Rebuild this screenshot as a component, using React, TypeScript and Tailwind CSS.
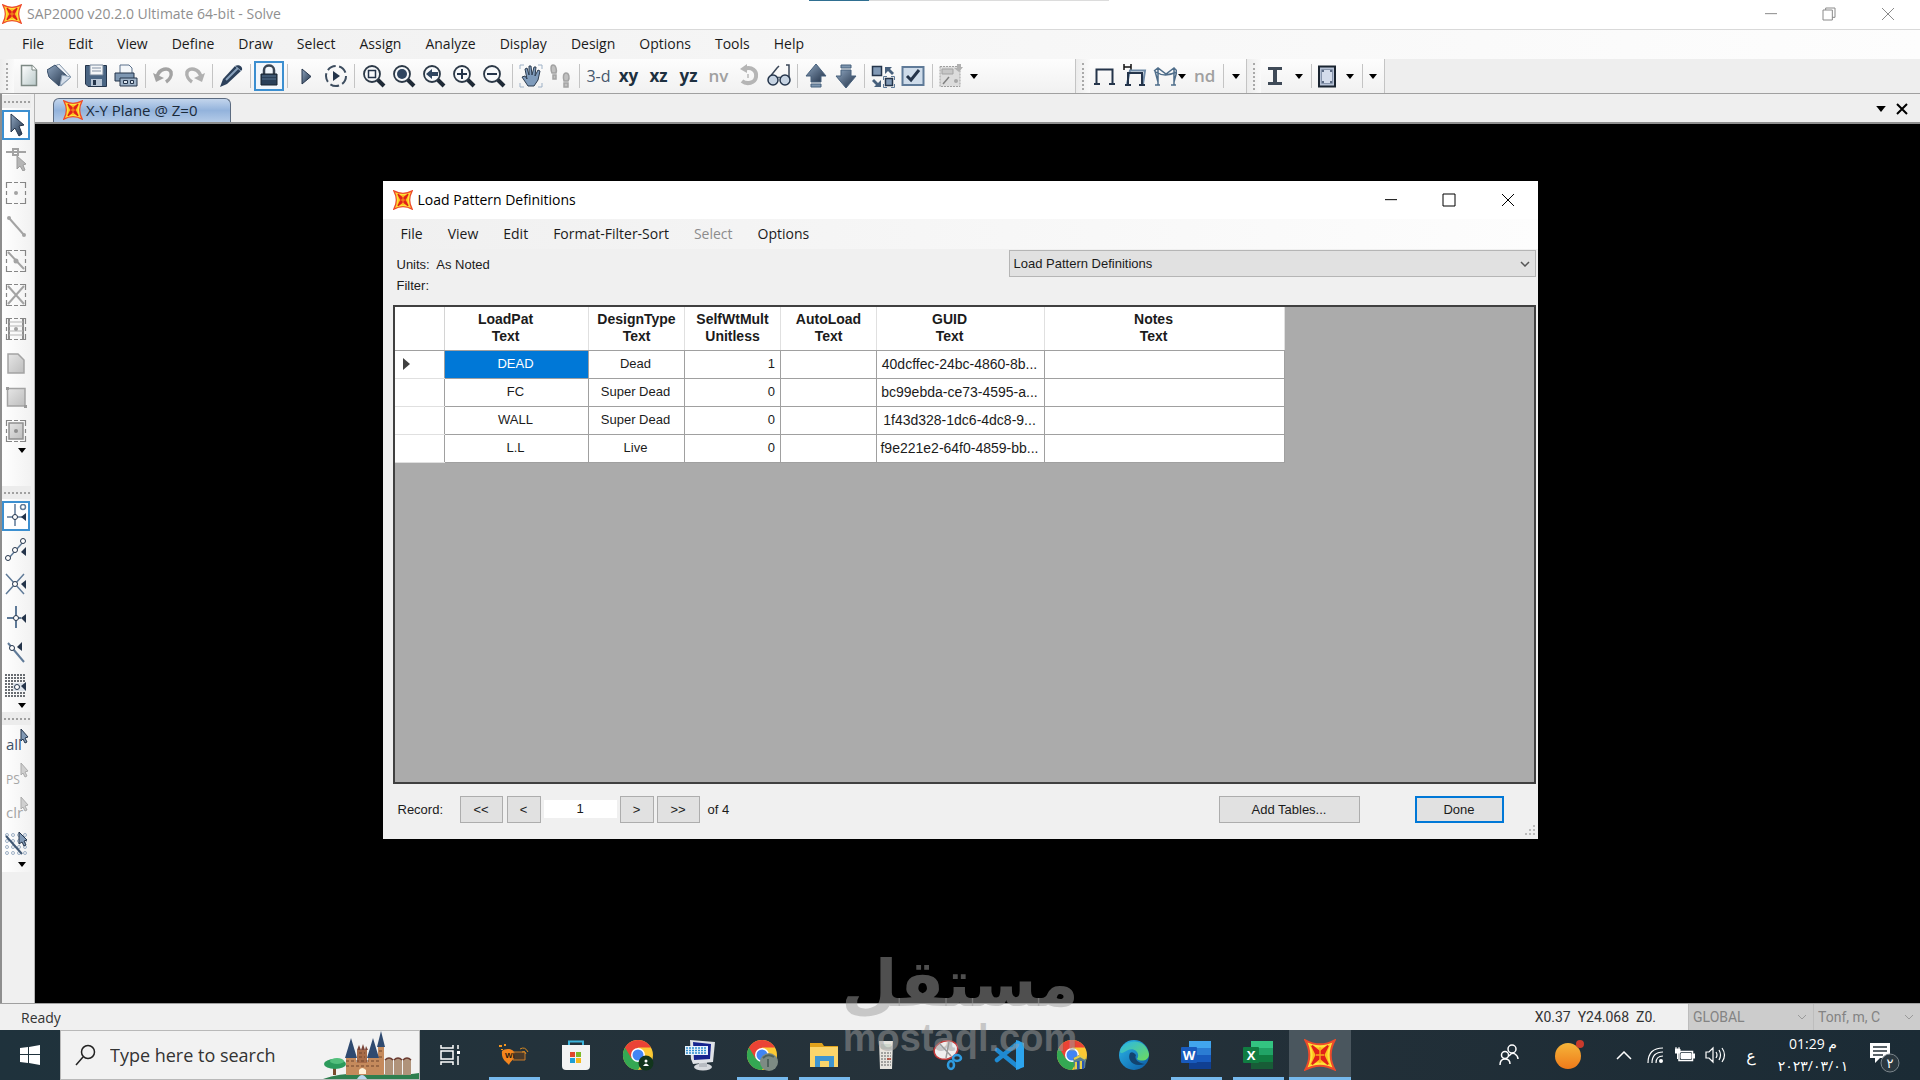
import type { ReactNode } from "react";
import clsx from "clsx";

const NAVY = "#24344a";
const STEEL = "#5f7a98";
const GRAY = "#a3a3a3";

const menuItems = [
  "File", "Edit", "View", "Define", "Draw", "Select", "Assign", "Analyze",
  "Display", "Design", "Options", "Tools", "Help",
];

const dialogMenu = ["File", "View", "Edit", "Format-Filter-Sort", "Select", "Options"];

const columns = [
  { name: "LoadPat", unit: "Text", width: "w-[144px]", shifted: true },
  { name: "DesignType", unit: "Text", width: "w-[96px]", shifted: false },
  { name: "SelfWtMult", unit: "Unitless", width: "w-[96px]", shifted: false },
  { name: "AutoLoad", unit: "Text", width: "w-[96px]", shifted: false },
  { name: "GUID", unit: "Text", width: "w-[168px]", shifted: true },
  { name: "Notes", unit: "Text", width: "w-[240px]", shifted: true },
];

const rows = [
  { pat: "DEAD", type: "Dead", mult: 1, guid: "40dcffec-24bc-4860-8b..." },
  { pat: "FC", type: "Super Dead", mult: 0, guid: "bc99ebda-ce73-4595-a..." },
  { pat: "WALL", type: "Super Dead", mult: 0, guid: "1f43d328-1dc6-4dc8-9..." },
  { pat: "L.L", type: "Live", mult: 0, guid: "f9e221e2-64f0-4859-bb..." },
];

function Icon({ children, size = 24 }: { children: ReactNode; size?: number }) {
  return (
    <svg width={size} height={size} viewBox="0 0 24 24" fill="none" aria-hidden="true" className="shrink-0">
      {children}
    </svg>
  );
}

function SapIcon({ size = 20 }: { size?: number }) {
  return (
    <Icon size={size}>
      <path d="M1 1Q12 7 23 1Q17 12 23 23Q12 17 1 23Q7 12 1 1Z" fill="#ffe23a" stroke="#ee4a2a" strokeWidth="1.500" />
      <path d="M4 4Q12 9 20 4Q15 12 20 20Q12 15 4 20Q9 12 4 4Z" fill="#fdc01c" />
      <path d="M6 5L12 10L18 5L14.500 12L18 19L12 14L6 19L9.500 12Z" fill="#e0201a" stroke="#e0201a" strokeWidth="1.500" />
      <path d="M12 6V18M9 12H15" stroke="#f9a81c" strokeWidth="1" />
    </Icon>
  );
}

/* ---------- toolbar drawings ---------- */

const defs = (
  <svg width="0" height="0" className="absolute" aria-hidden="true">
    <defs>
      <linearGradient id="steel" x1="0" y1="0" x2="1" y2="1">
        <stop offset="0" stopColor="#8fa6c0" />
        <stop offset="1" stopColor="#1f2f45" />
      </linearGradient>
      <linearGradient id="pale" x1="0" y1="0" x2="1" y2="1">
        <stop offset="0" stopColor="#ffffff" />
        <stop offset="1" stopColor="#b9c9c9" />
      </linearGradient>
      <linearGradient id="grayfill" x1="0" y1="0" x2="1" y2="1">
        <stop offset="0" stopColor="#e6e6e6" />
        <stop offset="1" stopColor="#bdbdbd" />
      </linearGradient>
      <linearGradient id="edgeA" x1="0" y1="0" x2="1" y2="1">
        <stop offset="0" stopColor="#2bb7e8" />
        <stop offset="1" stopColor="#0c59a4" />
      </linearGradient>
      <linearGradient id="edgeB" x1="0" y1="0" x2="1" y2="1">
        <stop offset="0" stopColor="#29b6ea" />
        <stop offset="1" stopColor="#6fdc5a" />
      </linearGradient>
      <linearGradient id="sun" x1="0" y1="0" x2="0" y2="1">
        <stop offset="0" stopColor="#f5b53a" />
        <stop offset="1" stopColor="#ef7a1a" />
      </linearGradient>
    </defs>
  </svg>
);

const newIcon = (
  <Icon>
    <path d="M4.500 1.500H15L19.500 6V21.500H4.500Z" fill="url(#pale)" stroke="#7d8984" strokeWidth="1.500" />
    <path d="M15 1.500V6H19.500" fill="#fff" stroke="#7d8984" />
  </Icon>
);
const openIcon = (
  <Icon>
    <path d="M8 2L12 0L24 13L14 22Z" fill="#eef2f7" stroke="#8496aa" />
    <path d="M0 6L8 1L20 12L12 22L2 13Z" fill="url(#steel)" stroke="#3a506b" />
    <path d="M13 22L15 11L24 13Z" fill="#d4deea" stroke="#8da0b5" />
  </Icon>
);
const saveIcon = (
  <Icon>
    <path d="M1.500 1.500H22.500V22.500H4L1.500 20Z" fill="#4a6583" stroke={NAVY} />
    <path d="M6 1H19V11H6Z" fill="#f4f6f8" stroke="#76879b" />
    <path d="M8 4H17M8 7H17" stroke="#8291a4" />
    <path d="M7 15H18V22H7Z" fill="#b7c5d5" />
    <path d="M9 16H12V21H9Z" fill={NAVY} />
  </Icon>
);
const printIcon = (
  <Icon>
    <path d="M6 1H15L18 4V10H6Z" fill="#f4f7fa" stroke="#5a708b" />
    <path d="M1 9H20V17H1Z" fill="#7e97b2" stroke={NAVY} />
    <path d="M6 14H23V22H6Z" fill="#9fb3c8" stroke={NAVY} />
    <path d="M9.500 16.500H13.500V19.500H9.500ZM16.500 16.500H19.500V19.500H16.500Z" fill="#dce5ee" stroke={NAVY} />
  </Icon>
);
const undoIcon = (
  <Icon>
    <path d="M5 13C7 4 17 3 19 8C20 12 17 16 14 18" stroke={GRAY} strokeWidth="3.500" />
    <path d="M1 9L4 18L12 14Z" fill={GRAY} />
  </Icon>
);
const redoIcon = (
  <Icon>
    <path d="M19 13C17 4 7 3 5 8C4 12 7 16 10 18" stroke="#b0b0b0" strokeWidth="3.500" />
    <path d="M23 9L20 18L12 14Z" fill="#b0b0b0" />
  </Icon>
);
const penIcon = (
  <Icon>
    <path d="M1 23L4 15L16 2C19 0 24 2 23 6L8 20Z" fill="#2c405a" />
    <path d="M7 16L19 4" stroke="#8aa2bd" strokeWidth="2" />
    <path d="M16 2L22 7" stroke="#93a7bd" />
  </Icon>
);
const lockIcon = (
  <Icon>
    <path d="M7 12V6C7 0 17 0 17 6V12" stroke="#3a4553" strokeWidth="2.500" />
    <path d="M4 10H20V21H4Z" fill="#2a4059" stroke="#16222f" />
    <path d="M5 12H19M5 15H19" stroke="#54708d" />
  </Icon>
);
const playIcon = (
  <Icon>
    <path d="M8 5L17 12.500L8 20Z" fill="url(#steel)" stroke={NAVY} />
  </Icon>
);
const runIcon = (
  <Icon>
    <circle cx="12" cy="12" r="10" stroke="#3d4d5f" strokeWidth="2" strokeDasharray="9 3.500" />
    <path d="M9 7L16 12L9 17Z" fill={NAVY} />
  </Icon>
);
function Lens({ children }: { children: ReactNode }) {
  return (
    <Icon>
      <path d="M15 15L22 22" stroke="#1f2a36" strokeWidth="4" />
      <circle cx="10" cy="10" r="8" fill="#f7f9fb" stroke="#2c3947" strokeWidth="1.800" />
      {children}
    </Icon>
  );
}
const handIcon = (
  <Icon>
    <path d="M1 5V1H5M19 1H23V5M23 19V23H19M5 23H1V19" stroke="#9eb1c6" />
    <path d="M3 13L6 12L8 15L6 5L8 4L10 11V2H12L13 11L15 3H17L16 12L19 6L21 7L19 16L15 22H9Z" fill="#7f9bbb" stroke="#2c3c50" />
  </Icon>
);
const feetIcon = (
  <Icon>
    <path d="M4 1C1 1 2 7 3 9H7C8 6 7 1 4 1ZM4 11H7V15H4ZM17 9C14 9 14 14 15 17H19C21 14 20 9 17 9ZM15 19H19V23H15Z" fill="#c0c0c0" stroke="#a3a3a3" strokeWidth="1.500" />
  </Icon>
);
const rotateIcon = (
  <Icon>
    <path d="M7 5C15 2 20 7 19 13C18 19 10 21 5 17" stroke="#b5b5b5" strokeWidth="4" />
    <path d="M10 0V9L3 5Z" fill="#b5b5b5" />
    <path d="M11 10V14" stroke="#c8c8c8" strokeWidth="2" />
  </Icon>
);
const glassesIcon = (
  <Icon>
    <path d="M2 14L10 4L12 2M22 14V1H19" stroke="#3a4657" strokeWidth="1.500" />
    <circle cx="6" cy="16" r="5" fill="#c6d3e2" stroke={NAVY} strokeWidth="1.500" />
    <circle cx="18" cy="16" r="5" fill="#c6d3e2" stroke={NAVY} strokeWidth="1.500" />
    <path d="M10 14Q12 12 14 14" stroke={NAVY} />
  </Icon>
);
const upIcon = (
  <Icon>
    <path d="M12 0L22 12H17V18H7V12H2Z" fill="url(#steel)" stroke="#47607c" />
    <path d="M7 20H17V23H7Z" fill="#7d95ae" stroke="#47607c" />
  </Icon>
);
const downIcon = (
  <Icon>
    <path d="M12 24L22 12H17V6H7V12H2Z" fill="url(#steel)" stroke="#47607c" />
    <path d="M7 1H17V4H7Z" fill="#7d95ae" stroke="#47607c" />
  </Icon>
);
const expandIcon = (
  <Icon>
    <path d="M1.500 2.500H10.500V11.500H1.500Z" fill="#8199b5" stroke={NAVY} strokeWidth="1.500" />
    <path d="M14.500 14.500H21.500V21.500H14.500Z" fill="#8199b5" stroke={NAVY} strokeWidth="1.500" />
    <path d="M12.500 16V12.500H16M20 12.500H23.500V16M16 23.500H12.500V20M20 23.500H23.500V20" stroke={STEEL} />
    <path d="M14 3H21L19 5L23 9L21 11L17 7L14 10ZM10 23H3L5 21L1 17L3 15L7 19L10 16Z" fill="#47607c" />
  </Icon>
);
const checkIcon = (
  <Icon>
    <path d="M1.500 3H22.500V21H1.500Z" fill="#cfdcea" stroke={STEEL} strokeWidth="2" />
    <path d="M6 12L10 16L18 6" stroke={NAVY} strokeWidth="3" />
  </Icon>
);
const designIcon = (
  <Icon>
    <path d="M1 2.500H21V22.500H1Z" fill="#dcdcdc" stroke="#a0a0a0" strokeDasharray="2 1" />
    <path d="M3 5H14V10H3Z" fill="#c7c7c7" stroke="#a3a3a3" />
    <path d="M4 20L10 13" stroke="#808080" strokeWidth="1.500" />
    <path d="M18 0H22V3H24L20 8L15 4H18Z" fill="#b0b0b0" />
    <circle cx="17" cy="17" r="2" fill="#a8a8a8" />
  </Icon>
);
const frameIcon = (
  <Icon>
    <path d="M3.500 20V5.500H19.500V20M1 20H7M16 20H22" stroke={NAVY} strokeWidth="2" />
  </Icon>
);
const frameLoadIcon = (
  <Icon>
    <path d="M1 0V6M8 0V6M1 3H8" stroke="#111" strokeWidth="1.500" />
    <path d="M4 20L7 6.500H22L20 20" stroke="#6f8ba8" strokeWidth="2" />
    <path d="M5 20V9H19V20M2 21H8M16 21H22" stroke={NAVY} strokeWidth="2" />
  </Icon>
);
const frameModeIcon = (
  <Icon>
    <path d="M1 7L5 4L13 10L21 4L24 7M5 4V21M21 4V21M2 7L5 18M24 7L21 18M3 8Q12 14 23 8M2 21H7M18 21H23" stroke="#4e6d8a" strokeWidth="1.500" />
  </Icon>
);
const beamIcon = (
  <Icon>
    <path d="M4 3H18V6H13V18H18V21H4V18H9V6H4Z" fill="#3f4a57" />
  </Icon>
);
const sectionIcon = (
  <Icon>
    <path d="M4 2.500H20V22.500H4Z" fill="#b7c2d6" stroke="#1a2430" strokeWidth="2" />
    <path d="M6.500 5.500H17.500V19.500H6.500Z" fill="#d4dceb" stroke="#8795ac" />
    <path d="M7 6H9V8H7ZM15 6H17V8H15ZM7 17H9V19H7ZM15 17H17V19H15Z" fill="#5c6b84" />
  </Icon>
);

const mainGroups: { label: string; icon: ReactNode; active?: boolean }[][] = [
  [{ label: "New", icon: newIcon }, { label: "Open", icon: openIcon }],
  [{ label: "Save", icon: saveIcon }, { label: "Print", icon: printIcon }],
  [{ label: "Undo", icon: undoIcon }, { label: "Redo", icon: redoIcon }],
  [{ label: "Refresh window", icon: penIcon }],
  [{ label: "Lock model", icon: lockIcon, active: true }],
  [{ label: "Run analysis", icon: playIcon }, { label: "Model-alive", icon: runIcon }],
  [
    { label: "Rubber band zoom", icon: <Lens><path d="M6.500 6.500H13.500V13.500H6.500Z" stroke={NAVY} strokeWidth="1.500" /></Lens> },
    { label: "Full view", icon: <Lens><circle cx="10" cy="10" r="5" fill="#2f4560" /></Lens> },
    { label: "Previous zoom", icon: <Lens><path d="M4 10L10 5V8H16V12H10V15Z" fill="#2f4560" /></Lens> },
    { label: "Zoom in", icon: <Lens><path d="M5 10H15M10 5V15" stroke={NAVY} strokeWidth="2" /></Lens> },
    { label: "Zoom out", icon: <Lens><path d="M5 10H15" stroke={NAVY} strokeWidth="2" /></Lens> },
  ],
  [{ label: "Pan", icon: handIcon }, { label: "Walk", icon: feetIcon }],
  [
    { label: "3-D view", icon: <span className="text-base text-[#46586d]">3-d</span> },
    { label: "XY view", icon: <b className="text-[17px]">xy</b> },
    { label: "XZ view", icon: <b className="text-[17px]">xz</b> },
    { label: "YZ view", icon: <b className="text-[17px]">yz</b> },
    { label: "Named view", icon: <span className="text-[17px] font-semibold text-[#a0a0a0]">nv</span> },
    { label: "Rotate view", icon: rotateIcon },
    { label: "Perspective", icon: glassesIcon },
  ],
  [{ label: "Move up", icon: upIcon }, { label: "Move down", icon: downIcon }],
  [{ label: "Shrink objects", icon: expandIcon }, { label: "Display options", icon: checkIcon }],
  [{ label: "Assign to group", icon: designIcon }],
];

/* ---------- side bar drawings ---------- */

const dashed = <path d="M2.500 7V1.500H8M16 1.500H21.500V7M21.500 17V22.500H16M8 22.500H2.500V17M10 1.500H14M10 22.500H14M2.500 10V14M21.500 10V14" stroke="#858585" strokeWidth="1.200" />;

const pointerIcon = (
  <Icon>
    <path d="M7 1V19L11 15L15 23L18 21L15 13L20 12Z" fill="url(#steel)" stroke={NAVY} />
  </Icon>
);
const drawTools = [
  { label: "Reshape", icon: <Icon><path d="M2 5H22M9 2H14V8H9Z" stroke={GRAY} strokeWidth="2" fill="#fff" /><path d="M13 9V22L16 19L19 24L21 23L19 18L22 17Z" fill="#b5b5b5" stroke="#9c9c9c" /></Icon> },
  { label: "Draw special joint", icon: <Icon>{dashed}<circle cx="12" cy="12" r="2" fill={GRAY} /></Icon> },
  { label: "Draw frame", icon: <Icon><path d="M5 3L20 20" stroke={GRAY} strokeWidth="2" /><circle cx="5" cy="3" r="2" fill={GRAY} /><circle cx="20" cy="20" r="2" fill={GRAY} /></Icon> },
  { label: "Quick draw frame", icon: <Icon>{dashed}<path d="M4 3L20 20" stroke={GRAY} strokeWidth="2" /><circle cx="12" cy="12" r="2.500" fill={GRAY} /></Icon> },
  { label: "Quick draw braces", icon: <Icon>{dashed}<path d="M4 3L20 21M20 3L4 21" stroke={GRAY} strokeWidth="2" /></Icon> },
  { label: "Quick draw secondary beams", icon: <Icon>{dashed}<path d="M5 2V22M19 2V22" stroke="#8c8c8c" strokeWidth="2" /><path d="M5 5H19M5 9H19M5 14H19M5 18H19" stroke="#b5b5b5" /><circle cx="12" cy="12" r="2" fill={GRAY} /></Icon> },
  { label: "Draw poly area", icon: <Icon><path d="M4 3H14L20 9V22H4Z" fill="url(#grayfill)" stroke={GRAY} strokeWidth="1.500" /></Icon> },
  { label: "Draw rectangular area", icon: <Icon><path d="M3.500 3.500H21V21H3.500Z" fill="url(#grayfill)" stroke={GRAY} strokeWidth="1.500" /><path d="M2 2H5V5H2ZM20 20H23V23H20Z" fill="#999" /></Icon> },
  { label: "Quick draw area", icon: <Icon>{dashed}<path d="M5 4H19V20H5Z" fill="url(#grayfill)" stroke="#8f8f8f" strokeWidth="1.500" /><circle cx="12" cy="12" r="2" fill="#8f8f8f" /></Icon> },
];

const marker = <path d="M22 8V17L17 12Z" fill={NAVY} />;
const snapTools = [
  { label: "Snap to points", active: true, icon: <Icon><path d="M11 0V22M3 13H20" stroke={STEEL} strokeWidth="1.500" /><circle cx="11" cy="13" r="2.500" fill="#fff" stroke={NAVY} /><circle cx="19" cy="3" r="2.500" stroke={STEEL} strokeWidth="1.500" /><path d="M22 9V17L17 13Z" fill={NAVY} /></Icon> },
  { label: "Snap to ends", icon: <Icon><path d="M4 21L20 3" stroke={STEEL} strokeWidth="1.500" />{[[4, 20], [11, 12], [19, 3]].map(([x, y]) => <circle key={x} cx={x} cy={y} r="2.500" fill="#fff" stroke={NAVY} />)}<path d="M22 9V18L17 14Z" fill={NAVY} /></Icon> },
  { label: "Snap to intersections", icon: <Icon><path d="M2 2L20 22M20 2L2 22" stroke={STEEL} strokeWidth="1.500" /><circle cx="11" cy="12" r="2.500" fill="#fff" stroke={NAVY} />{marker}</Icon> },
  { label: "Snap perpendicular", icon: <Icon><path d="M12 0V22M3 12H17" stroke={STEEL} strokeWidth="2" /><circle cx="12" cy="12" r="2.500" fill="#fff" stroke={NAVY} />{marker}</Icon> },
  { label: "Snap to lines", icon: <Icon><path d="M4 3L20 22" stroke={STEEL} strokeWidth="2" /><circle cx="8" cy="8" r="2.500" fill="#fff" stroke={NAVY} /><path d="M18 2V11L13 7Z" fill={NAVY} /></Icon> },
  { label: "Snap to fine grid", icon: <Icon><path d="M1 1H22M1 4H22M1 7H22M1 10H22M1 13H22M1 16H22M1 19H22M1 22H22" stroke="#3a3f45" strokeWidth="1.500" strokeDasharray="2 1" /><path d="M9 9H22V17H9Z" fill="#dbe1e8" /><circle cx="13" cy="13" r="2.500" fill="#fff" stroke={NAVY} />{marker}</Icon> },
];

function TextTool({ text, muted }: { text: string; muted?: boolean }) {
  return (
    <svg width="26" height="28" viewBox="0 0 26 28" aria-hidden="true">
      <text x="3" y="22" fontSize={text === "PS" ? 12 : 15} fontFamily="Open Sans, sans-serif" fill={muted ? "#a5a5a5" : "#3e5168"}>{text}</text>
      <path d="M18 1V13L20 11L22 15L24 14L22 10L25 9Z" fill={muted ? "#cfcfcf" : "#8199b5"} stroke={muted ? "#ababab" : NAVY} />
    </svg>
  );
}

const selectTools = [
  { label: "Select all", icon: <TextTool text="all" /> },
  { label: "Previous selection", icon: <TextTool text="PS" muted /> },
  { label: "Clear selection", icon: <TextTool text="clr" muted /> },
  { label: "Intersecting line select", icon: <Icon>{[3, 9, 15, 21].map((x) => [3, 9, 15, 21].map((y) => <circle key={`${x}-${y}`} cx={x} cy={y} r="1.500" stroke="#9db0c5" />))}<path d="M2 4L18 22" stroke="#3f5672" strokeWidth="2" /><path d="M15 0V12L18 10L20 14L22 13L20 9L23 8Z" fill="#8199b5" stroke={NAVY} /></Icon> },
];

function Caret({ className }: { className?: string }) {
  return (
    <svg width="8" height="5" viewBox="0 0 8 5" className={className} aria-hidden="true">
      <path d="M0 0H8L4 5Z" fill="#000" />
    </svg>
  );
}

function Divider() {
  return <span className="h-6 w-px bg-[#c4c4c4]" />;
}

function ToolButton({ label, children, active }: { label: string; children: ReactNode; active?: boolean }) {
  return (
    <button
      aria-label={label}
      className={clsx(
        "flex h-[30px] w-[30px] shrink-0 items-center justify-center text-[#1d3040]",
        active && "border-2 border-[#3c8fd0] bg-[#f2f7fc]",
      )}
    >
      {children}
    </button>
  );
}

function Grip() {
  return (
    <span className="flex h-full w-[14px] shrink-0 items-center justify-center bg-linear-to-r from-[#ececec] to-[#fafafa]">
      <span className="h-[27px] border-l-2 border-dotted border-[#a9a9a9]" />
    </span>
  );
}

function SideTool({ label, children, active }: { label: string; children: ReactNode; active?: boolean }) {
  return (
    <div className="flex h-[34px] items-center">
      <button
        aria-label={label}
        className={clsx("flex h-[30px] w-7 items-center justify-center", active && "border-2 border-[#3c8fd0] bg-white")}
      >
        {children}
      </button>
    </div>
  );
}

function SideGrip() {
  return (
    <div className="flex h-[13px] items-center justify-center bg-[#ececec]">
      <span className="w-[26px] border-t-2 border-dotted border-[#a0a0a0]" />
    </div>
  );
}

function MenuBar({ items, label, disabled, gap }: { items: string[]; label: string; disabled?: string; gap: string }) {
  return (
    <nav aria-label={label} className={clsx("flex items-center", gap)}>
      {items.map((item) => (
        <button key={item} disabled={item === disabled} className="text-sm text-[#1b1b1b] disabled:text-[#8c8c8c]">
          {item}
        </button>
      ))}
    </nav>
  );
}

function AppHeader() {
  return (
    <header className="shrink-0 bg-white">
      <div className="relative flex h-[30px] items-center border-b border-[#d9d9d9] pb-px pl-[2px]">
        <SapIcon />
        <h1 className="ml-[5px] text-sm text-[#8f8f8f]">SAP2000 v20.2.0 Ultimate 64-bit - Solve</h1>
        <div className="ml-auto flex pr-[2px] text-[#8a8a8a]">
          <button aria-label="Minimize" className="flex w-[59px] justify-center"><Icon size={16}><path d="M3 11.500H21" stroke="currentColor" strokeWidth="1.500" /></Icon></button>
          <button aria-label="Restore" className="flex w-[58px] justify-center"><Icon size={16}><path d="M3 6H17V21H3ZM7 6V3H21V17H17" stroke="currentColor" strokeWidth="1.500" /></Icon></button>
          <button aria-label="Close" className="flex w-[60px] justify-center"><Icon size={16}><path d="M3 3L21 21M21 3L3 21" stroke="currentColor" strokeWidth="1.500" /></Icon></button>
        </div>
        <div className="absolute top-0 left-[809px] flex h-px w-[300px] bg-[#dcdcdc]">
          <span className="w-[60px] bg-[#2f6f91]" />
        </div>
      </div>

      <div className="flex h-[29px] items-center bg-linear-to-r from-[#f0f0f0] to-[#fdfdfd] pb-[2px] pl-[22px]">
        <MenuBar items={menuItems} label="Main menu" gap="gap-6" />
      </div>

      <div className="flex h-[35px] border-b border-[#a0a0a0] bg-[#eeeeee]">
        <div className="flex w-[1075px] items-center bg-linear-to-b from-[#fdfdfd] to-[#f1f1f1]">
          <Grip />
          <div className="flex w-[952px] items-center justify-between">
            {mainGroups.map((group, i) => (
              <div key={i} className="contents">
                {i > 0 && <Divider />}
                <div className="flex">
                  {group.map((tool) => (
                    <ToolButton key={tool.label} label={tool.label} active={tool.active}>{tool.icon}</ToolButton>
                  ))}
                </div>
              </div>
            ))}
          </div>
          <button aria-label="More groups" className="px-1"><Caret /></button>
        </div>
        <div className="flex w-[171px] items-center border-l border-[#c4c4c4] bg-linear-to-b from-[#fdfdfd] to-[#f1f1f1]">
          <Grip />
          <div className="flex w-[88px]">
            <ToolButton label="Undeformed shape">{frameIcon}</ToolButton>
            <ToolButton label="Joint loads">{frameLoadIcon}</ToolButton>
            <ToolButton label="Deformed shape">{frameModeIcon}</ToolButton>
          </div>
          <Caret />
          <button aria-label="Named display" className="px-2 text-[17px] font-semibold text-[#a0a0a0]">nd</button>
          <Divider />
          <Caret className="ml-2" />
        </div>
        <div className="flex w-[139px] items-center border-x border-[#c4c4c4] bg-linear-to-b from-[#fdfdfd] to-[#f1f1f1]">
          <Grip />
          <ToolButton label="Steel frame design">{beamIcon}</ToolButton>
          <Caret className="mr-2 ml-1" />
          <Divider />
          <ToolButton label="Concrete frame design">{sectionIcon}</ToolButton>
          <Caret className="mr-2 ml-1" />
          <Divider />
          <Caret className="ml-[6px]" />
        </div>
      </div>
    </header>
  );
}

function SideBar() {
  return (
    <aside className="w-[35px] shrink-0 border-r border-l-2 border-[#8e8e8e] border-r-[#b5b5b5] bg-[#f0f0f0]">
      <div className="h-[392px] w-[29px] bg-linear-to-r from-white to-[#f2f2f2] pt-px">
        <SideGrip />
        <SideTool label="Pointer" active>{pointerIcon}</SideTool>
        {drawTools.map((tool) => <SideTool key={tool.label} label={tool.label}>{tool.icon}</SideTool>)}
      <Caret className="ml-4" />
      </div>
      <div className="h-[226px] w-[29px] bg-linear-to-r from-white to-[#f2f2f2]">
        <SideGrip />
        {snapTools.map((tool) => <SideTool key={tool.label} label={tool.label} active={tool.active}>{tool.icon}</SideTool>)}
        <Caret className="ml-4" />
      </div>
      <div className="h-[160px] w-[29px] bg-linear-to-r from-white to-[#f2f2f2]">
        <SideGrip />
        {selectTools.map((tool) => <SideTool key={tool.label} label={tool.label}>{tool.icon}</SideTool>)}
        <Caret className="ml-4 mt-px" />
      </div>
    </aside>
  );
}

function LoadTable() {
  return (
    <table className="table-fixed border-collapse bg-white text-center text-[13px] leading-4 text-[#1b1b1b]">
      <thead>
        <tr className="h-[43px]">
          <th className="w-[50px] border-r border-b border-[#d4d4d4] border-b-[#a0a0a0]" />
          {columns.map((col) => (
            <th
              key={col.name}
              className={clsx(
                "border-x border-b border-[#e0e0e0] border-b-[#a0a0a0] p-0 text-sm leading-[17px] font-bold",
                col.width,
                col.shifted && "pr-[22px]",
              )}
            >
              {col.name}
              <br />
              {col.unit}
            </th>
          ))}
        </tr>
      </thead>
      <tbody>
        {rows.map((row, i) => (
          <tr key={row.pat} className="h-7">
            <td className="border-b border-[#e0e0e0] p-0 pl-2">
              {i === 0 && (
                <svg width="7" height="12" viewBox="0 0 7 12" aria-hidden="true"><path d="M0 0L7 6L0 12Z" fill="#404040" /></svg>
              )}
            </td>
            <td className={clsx("border border-[#a0a0a0] p-0 pr-[2px]", i === 0 && "bg-[#0078d7] text-white")}>{row.pat}</td>
            <td className="border border-[#a0a0a0] p-0 pr-[2px]">{row.type}</td>
            <td className="border border-[#a0a0a0] p-0 pr-[5px] text-right">{row.mult}</td>
            <td className="border border-[#a0a0a0] p-0" />
            <td className="border border-[#a0a0a0] p-0 pr-[2px] text-sm leading-4 whitespace-nowrap">{row.guid}</td>
            <td className="border border-[#a0a0a0] p-0" />
          </tr>
        ))}
      </tbody>
    </table>
  );
}

function RecordButton({ children, className }: { children: ReactNode; className: string }) {
  return (
    <button className={clsx("h-[27px] border border-[#adadad] bg-[#e1e1e1] text-[13px] text-[#1b1b1b]", className)}>
      {children}
    </button>
  );
}

function LoadPatternDialog() {
  return (
    <section
      role="dialog"
      aria-labelledby="dialog-title"
      className="relative flex h-[658px] w-[1155px] max-w-full flex-col bg-[#f0f0f0]"
    >
      <div className="flex h-[38px] shrink-0 items-center bg-white pl-[10px]">
        <SapIcon />
        <h2 id="dialog-title" className="ml-[5px] text-sm text-black">Load Pattern Definitions</h2>
        <div className="ml-auto flex text-black">
          <button aria-label="Minimize" className="flex w-[58px] justify-center"><Icon size={16}><path d="M3 11.500H21" stroke="currentColor" strokeWidth="1.500" /></Icon></button>
          <button aria-label="Maximize" className="flex w-[58px] justify-center"><Icon size={16}><path d="M3 3H21V21H3Z" stroke="currentColor" strokeWidth="1.500" /></Icon></button>
          <button aria-label="Close" className="flex w-[60px] justify-center"><Icon size={16}><path d="M3 3L21 21M21 3L3 21" stroke="currentColor" strokeWidth="1.500" /></Icon></button>
        </div>
      </div>
      <div className="flex h-[30px] shrink-0 items-center bg-linear-to-r from-[#f0f0f0] to-[#fdfdfd] pl-[18px]">
        <MenuBar items={dialogMenu} label="Table menu" disabled="Select" gap="gap-[25px]" />
      </div>

      <div className="flex h-14 shrink-0 justify-between pr-[2px] pl-[14px] font-['Liberation_Sans',sans-serif] text-[13px] text-[#1b1b1b]">
        <div className="pt-[5px] leading-[21px]">
          <p>Units:&nbsp; As Noted</p>
          <p>Filter:</p>
        </div>
        <div className="relative mt-px h-[27px] w-[527px]">
          <select aria-label="Table" className="h-full w-full appearance-none border border-[#b5b5b5] bg-[#e1e1e1] px-1">
            <option>Load Pattern Definitions</option>
          </select>
          <svg width="10" height="6" viewBox="0 0 10 6" fill="none" className="pointer-events-none absolute top-[11px] right-[6px]" aria-hidden="true">
            <path d="M1 1L5 5L9 1" stroke="#555" strokeWidth="1.500" />
          </svg>
        </div>
      </div>

      <div className="mr-[2px] ml-[10px] flex-1 border-2 border-[#404040] bg-[#ababab] font-['Liberation_Sans',sans-serif]">
        <LoadTable />
      </div>

      <div className="flex h-[55px] shrink-0 items-start pt-3 pr-[34px] pl-[15px] font-['Liberation_Sans',sans-serif] text-[13px] text-[#1b1b1b]">
        <label htmlFor="record" className="w-[62px] leading-[27px]">Record:</label>
        <RecordButton className="w-[43px]">&lt;&lt;</RecordButton>
        <RecordButton className="ml-1 w-[34px]">&lt;</RecordButton>
        <input id="record" defaultValue="1" className="mx-[3px] mt-1 h-[18px] w-[73px] bg-white text-center outline-none" />
        <RecordButton className="w-[34px]">&gt;</RecordButton>
        <RecordButton className="ml-[3px] w-[43px]">&gt;&gt;</RecordButton>
        <span className="ml-2 leading-[27px]">of 4</span>
        <RecordButton className="ml-auto w-[141px]">Add Tables...</RecordButton>
        <button className="ml-[55px] h-[27px] w-[89px] border-2 border-[#0078d7] bg-[#e1e1e1]">Done</button>
      </div>
      <svg width="12" height="12" viewBox="0 0 12 12" className="absolute right-[2px] bottom-[2px]" aria-hidden="true">
        <path d="M9 0H11V2H9ZM5 4H7V6H5ZM9 4H11V6H9ZM1 8H3V10H1ZM5 8H7V10H5ZM9 8H11V10H9Z" fill="#bcbcbc" />
      </svg>
    </section>
  );
}

function StatusSelect({ label, value, className }: { label: string; value: string; className: string }) {
  return (
    <div className={clsx("relative h-full border-l border-[#bdbdbd]", className)}>
      <select aria-label={label} disabled className="h-full w-full appearance-none bg-[#cccccc] px-1 text-[#838383] opacity-100">
        <option>{value}</option>
      </select>
      <svg width="10" height="6" viewBox="0 0 10 6" fill="none" className="pointer-events-none absolute top-[10px] right-[6px]" aria-hidden="true">
        <path d="M1 1L5 5L9 1" stroke="#9a9a9a" />
      </svg>
    </div>
  );
}

function StatusBar() {
  return (
    <footer className="flex h-[27px] shrink-0 items-center border-t border-[#a0a0a0] bg-[#f0f0f0] pl-[21px] text-sm text-[#333]">
      <span className="pt-[2px]">Ready</span>
      <span className="mr-8 ml-auto font-['Roboto',sans-serif] whitespace-pre">X0.37  Y24.068  Z0.</span>
      <StatusSelect label="Coordinate system" value="GLOBAL" className="w-[125px] font-['Roboto',sans-serif]" />
      <StatusSelect label="Units" value="Tonf, m, C" className="w-[107px] font-['Roboto',sans-serif]" />
    </footer>
  );
}

/* ---------- taskbar ---------- */

function ChromeLogo({ children }: { children?: ReactNode }) {
  return (
    <svg width="32" height="32" viewBox="0 0 32 32" aria-hidden="true">
      <circle cx="16" cy="16" r="15" fill="#fcc934" />
      <path d="M3 8.500A15 15 0 0 0 16 31L22.500 19.500L16 16Z" fill="#34a853" />
      <path d="M3 8.500A15 15 0 0 1 29 8.500H16L9.500 19.500Z" fill="#ea4335" />
      <circle cx="16" cy="16" r="7" fill="#fff" />
      <circle cx="16" cy="16" r="5.500" fill="#4285f4" />
      {children}
    </svg>
  );
}

function OfficeLogo({ letter, shades }: { letter: string; shades: string[] }) {
  return (
    <svg width="32" height="30" viewBox="0 0 32 30" aria-hidden="true">
      <path d="M9 1H31V8H9Z" fill={shades[0]} />
      <path d="M9 8H31V15H9Z" fill={shades[1]} />
      <path d="M9 15H31V22H9Z" fill={shades[2]} />
      <path d="M9 22H31V29H9Z" fill={shades[3]} />
      <rect x="1" y="7" width="16" height="16" rx="1" fill={shades[4]} />
      <text x="9" y="20" textAnchor="middle" fontSize="13" fontWeight="700" fontFamily="Open Sans, sans-serif" fill="#fff">{letter}</text>
    </svg>
  );
}

const pinned: { label: string; open?: boolean; current?: boolean; logo: ReactNode }[] = [
  {
    label: "Wifi tool", open: true,
    logo: (
      <svg width="32" height="24" viewBox="0 0 32 24" aria-hidden="true">
        <path d="M4 8C7 5 16 5 17 11C17 17 12 18 11 22C8 18 3 17 4 8Z" fill="#f5861e" />
        <path d="M16 9H27V17H15Z" stroke="#c77a2a" fill="#4a3a2a" />
        <path d="M1 2H4V4H1ZM6 1H8V3H6ZM3 6H5V7H3Z" fill="#f5961e" />
        <path d="M22 6Q27 3 30 9M24 9Q27 7 28 11" stroke="#d98a22" fill="none" />
        <text x="7" y="15" fontSize="8" fontWeight="700" fontFamily="Liberation Sans, sans-serif" fill="#2b1a10">Wi</text>
      </svg>
    ),
  },
  {
    label: "Store",
    logo: (
      <svg width="30" height="32" viewBox="0 0 30 32" aria-hidden="true">
        <path d="M8 7V2.500H22V7" stroke="#3cb4dc" strokeWidth="2" fill="none" />
        <path d="M1 6H29V27Q29 31 25 31H5Q1 31 1 27Z" fill="#f3f3f3" />
        <path d="M9 13H14V18H9Z" fill="#e0472c" /><path d="M15 13H20V18H15Z" fill="#7db928" />
        <path d="M9 19H14V24H9Z" fill="#1c9fd8" /><path d="M15 19H20V24H15Z" fill="#f5b81c" />
      </svg>
    ),
  },
  {
    label: "Chrome",
    logo: (
      <ChromeLogo>
        <circle cx="24" cy="24" r="7.500" fill="#12351c" />
        <circle cx="24" cy="22" r="1.500" fill="#fff" />
        <path d="M21 27Q24 22 27 27Z" fill="#fff" />
      </ChromeLogo>
    ),
  },
  {
    label: "On-screen keyboard",
    logo: (
      <svg width="32" height="32" viewBox="0 0 32 32" aria-hidden="true">
        <ellipse cx="19" cy="28" rx="9" ry="3.500" fill="#d6d9dd" />
        <path d="M15 20H23V28H15Z" fill="#b8bcc2" />
        <path d="M6 1L31 3L29 23L9 25L7 20Z" fill="#dfe2e6" />
        <path d="M9 3L27 5L26 20L10 21Z" fill="#16248f" />
        <path d="M1 7H24V16H1Z" fill="#e8f2fb" />
        <path d="M2 9H23M2 11.500H23M2 14H23" stroke="#2f8fd0" strokeWidth="1.500" strokeDasharray="2 1" />
      </svg>
    ),
  },
  {
    label: "Chrome profile", open: true,
    logo: (
      <ChromeLogo>
        <circle cx="23" cy="23" r="9" fill="#7d8b84" />
        <path d="M17 19Q22 14 28 18M22 20V28" stroke="#4f625c" strokeWidth="2" fill="none" />
      </ChromeLogo>
    ),
  },
  {
    label: "File Explorer", open: true,
    logo: (
      <svg width="30" height="26" viewBox="0 0 30 26" aria-hidden="true">
        <path d="M1 1H13L15 4H29V8H1Z" fill="#e0a21c" />
        <path d="M1 5H29V25H1Z" fill="#fbd56a" />
        <path d="M6 25V14H25V25H20V19H11V25Z" fill="#3f95d0" />
      </svg>
    ),
  },
  {
    label: "Calculator",
    logo: (
      <svg width="16" height="30" viewBox="0 0 16 30" aria-hidden="true">
        <path d="M1 1H15L14 29H2Z" fill="#e6e4df" />
        <path d="M3 4H13V9H3Z" fill="#cfd6cc" />
        <path d="M3 13H13M3 16H13M3 19H13M3 22H13M3 25H13" stroke="#8a8a8a" strokeWidth="1.500" strokeDasharray="2 1" />
        <path d="M9 19H13" stroke="#b8402f" strokeWidth="1.500" />
      </svg>
    ),
  },
  {
    label: "Snipping Tool",
    logo: (
      <svg width="32" height="32" viewBox="0 0 32 32" fill="none" aria-hidden="true">
        <ellipse cx="14" cy="11" rx="12" ry="9" fill="#f0eeee" stroke="#c43a3a" strokeWidth="1.500" transform="rotate(-15 14 11)" />
        <path d="M8 5L19 17M17 3L14 19" stroke="#9b9b9b" strokeWidth="1.500" />
        <ellipse cx="25" cy="19" rx="4" ry="3" stroke="#2f9be0" strokeWidth="2.500" />
        <ellipse cx="19" cy="26" rx="3" ry="4" stroke="#2f9be0" strokeWidth="2.500" />
      </svg>
    ),
  },
  {
    label: "Visual Studio Code",
    logo: (
      <svg width="32" height="32" viewBox="0 0 32 32" fill="none" aria-hidden="true">
        <path d="M3 11L24 28M3 21L24 4" stroke="#1f8ad2" strokeWidth="4.500" strokeLinecap="round" />
        <path d="M22 1L30 4V28L22 31Z" fill="#2ca4ee" />
      </svg>
    ),
  },
  {
    label: "Chrome work profile",
    logo: (
      <ChromeLogo>
        <path d="M17 19L23 16L30 20L29 29L19 31Z" fill="#5b7f8c" />
        <path d="M18 20L24 17L29 20M20 30V23M25 30V22" stroke="#e6cf4a" strokeWidth="2" fill="none" />
        <path d="M22 22V30M27 22V30" stroke="#2c56b0" strokeWidth="2" />
      </ChromeLogo>
    ),
  },
  {
    label: "Edge",
    logo: (
      <svg width="32" height="32" viewBox="0 0 32 32" aria-hidden="true">
        <circle cx="16" cy="16" r="15" fill="url(#edgeA)" />
        <path d="M2 12C5 1 27 -3 31 15C31 22 23 23 19 20C23 14 16 8 10 11C6 13 2 16 2 12Z" fill="url(#edgeB)" />
        <path d="M12 14C9 20 14 29 27 25C20 24 16 20 18 16Q15 12 12 14Z" fill="#12436f" />
      </svg>
    ),
  },
  { label: "Word", open: true, logo: <OfficeLogo letter="W" shades={["#41a5ee", "#2b7cd3", "#185abd", "#103f91", "#185abd"]} /> },
  { label: "Excel", open: true, logo: <OfficeLogo letter="X" shades={["#33c481", "#21a366", "#107c41", "#185c37", "#107c41"]} /> },
  { label: "SAP2000", open: true, current: true, logo: <SapIcon size={32} /> },
];

function Castle() {
  return (
    <svg width="96" height="49" viewBox="0 0 96 49" aria-hidden="true">
      <path d="M0 49Q20 42 50 44T96 43V49Z" fill="#2f7f4f" />
      <path d="M62 30Q66 26 70 30V45H62ZM71 30Q75 26 79 30V45H71ZM80 30Q84 26 88 30V45H80Z" fill="#b0937a" />
      <path d="M62 30Q66 26 70 30M71 30Q75 26 79 30M80 30Q84 26 88 30" stroke="#6b3a30" strokeWidth="1.500" fill="none" />
      <path d="M23 27H33V45H23ZM45 27H57V45H45ZM55 16H61V45H55ZM33 32H46V45H33Z" fill="#c58a5c" />
      <path d="M34 20H44V33H34Z" fill="#a86c48" />
      <path d="M34 20L36 15L38 20L40 14L42 20L43 16L45 20Z" fill="#7a4438" />
      <path d="M22 28L28 8L34 28ZM44 28L50 8L56 28ZM54 17L58 1L62 17Z" fill="#2f4a70" />
      <path d="M23 36H57M23 31H57M36 23H42M36 27H42M56 21H61M56 27H61" stroke="#6e452d" strokeDasharray="3 2" />
      <path d="M36 44V40Q39 36 43 40V44Z" fill="#fff3da" />
      <path d="M34 49Q39 41 44 49Z" fill="#b9d6ec" />
      <path d="M10 36H13V45H10Z" fill="#7a4b2c" />
      <ellipse cx="12" cy="34" rx="11" ry="5" fill="#2c9b5c" />
      <ellipse cx="14" cy="31" rx="7" ry="3" fill="#53bf7c" />
    </svg>
  );
}

function Taskbar() {
  return (
    <div className="flex h-[50px] shrink-0 items-stretch bg-linear-to-r from-[#1f323c] via-[#26323a] to-[#1b2b35] text-white">
      <button aria-label="Start" className="flex w-[60px] items-center justify-center">
        <svg width="20" height="20" viewBox="0 0 20 20" aria-hidden="true">
          <path d="M0 3L8 2V9H0ZM9 2L20 0V9H9ZM0 10H8V18L0 17ZM9 10H20V20L9 18Z" fill="#fff" />
        </svg>
      </button>
      <label className="relative flex w-[360px] items-center border border-[#b9b9b9] bg-[#f2f2f2] pl-[14px]">
        <svg width="22" height="22" viewBox="0 0 22 22" fill="none" aria-hidden="true">
          <circle cx="13" cy="8" r="6.500" stroke="#222" strokeWidth="1.500" />
          <path d="M8 13L1 21" stroke="#222" strokeWidth="1.500" />
        </svg>
        <input
          aria-label="Search"
          placeholder="Type here to search"
          className="ml-[13px] w-[200px] bg-transparent text-lg text-[#333] outline-none placeholder:text-[#333]"
        />
        <span className="absolute right-0 bottom-0"><Castle /></span>
      </label>
      <button aria-label="Task view" className="flex w-[63px] items-center justify-center pr-1">
        <svg width="20" height="20" viewBox="0 0 20 20" fill="none" stroke="#fff" strokeWidth="1.500" aria-hidden="true">
          <path d="M1 0V3H13V0M1 20V17H13V20M1 6H13V14H1ZM18 0V4M18 11V20" />
          <path d="M17 6H20V9H17Z" fill="#fff" stroke="none" />
        </svg>
      </button>
      {pinned.map((app) => (
        <button
          key={app.label}
          aria-label={app.label}
          className={clsx("relative flex w-[62px] items-center justify-center", app.current && "bg-[#4a565e]")}
        >
          {app.logo}
          {app.open && <span className={clsx("absolute bottom-0 h-[3px] bg-[#76b9ed]", app.current ? "w-full" : "w-[51px]")} />}
        </button>
      ))}

      <div className="ml-auto flex items-center">
        <button aria-label="People" className="flex w-[42px] justify-center">
          <svg width="20" height="22" viewBox="0 0 20 22" fill="none" stroke="#fff" strokeWidth="1.500" aria-hidden="true">
            <circle cx="13" cy="5" r="4" /><path d="M10 12Q13 8 16 10Q19 12 19 15" />
            <circle cx="6" cy="11" r="3.500" /><path d="M1 21Q1 15 6 15Q11 15 11 20" />
          </svg>
        </button>
        <button aria-label="Weather" className="flex w-[78px] justify-center">
          <svg width="30" height="30" viewBox="0 0 30 30" aria-hidden="true">
            <circle cx="14" cy="16" r="13" fill="url(#sun)" />
            <circle cx="26" cy="4" r="4" fill="#c93a2c" />
          </svg>
        </button>
        <button aria-label="Show hidden icons" className="flex w-8 justify-center">
          <svg width="16" height="9" viewBox="0 0 16 9" fill="none" aria-hidden="true"><path d="M1 8L8 1L15 8" stroke="#fff" strokeWidth="1.500" /></svg>
        </button>
        <button aria-label="Network" className="flex w-[30px] justify-center">
          <svg width="17" height="17" viewBox="0 0 17 17" fill="none" stroke="#fff" aria-hidden="true">
            <path d="M1 16Q1 1 16 1M5 16Q5 5 16 5M9 16Q9 9 16 9" strokeWidth="1.200" />
            <circle cx="14" cy="14" r="2" fill="#fff" stroke="none" />
          </svg>
        </button>
        <button aria-label="Battery" className="flex w-[30px] justify-center">
          <svg width="20" height="16" viewBox="0 0 20 16" fill="none" stroke="#fff" aria-hidden="true">
            <path d="M4 4.500H17.500V13.500H4Z" strokeWidth="1.500" /><path d="M6 6.500H16V11.500H6Z" fill="#fff" />
            <path d="M18 7V11H20V7ZM0 2H5V6H0ZM1 0V2M4 0V2M2.500 6V12" fill="#fff" />
          </svg>
        </button>
        <button aria-label="Volume" className="flex w-[30px] justify-center">
          <svg width="21" height="18" viewBox="0 0 21 18" fill="none" stroke="#fff" aria-hidden="true">
            <path d="M1 6H4L8 2V16L4 12H1ZM11 6Q13 9 11 12M14 4Q17 9 14 14M17 2Q22 9 17 16" strokeWidth="1.200" />
          </svg>
        </button>
        <button className="w-[42px] text-center text-base">ع</button>
        <div className="w-[82px] text-center text-sm leading-[22px]">
          <div>01:29 م</div>
          <div>٢٠٢٣/٠٣/٠١</div>
        </div>
        <button aria-label="Notifications" className="relative flex w-[66px] justify-center pt-1 pr-1">
          <svg width="34" height="34" viewBox="0 0 34 34" aria-hidden="true">
            <path d="M2 3H22V18H12L7 23V18H2Z" fill="#fff" />
            <path d="M5 7H19M5 11H19M5 15H15" stroke="#26323a" strokeWidth="1.500" />
            <circle cx="22" cy="23" r="9" fill="#2b3840" stroke="#7c868c" />
            <text x="22" y="28" textAnchor="middle" fontSize="13" fontFamily="DejaVu Sans, sans-serif" fill="#fff">٢</text>
          </svg>
        </button>
      </div>
    </div>
  );
}

export default function App() {
  return (
    <div className="relative flex h-screen min-h-[960px] flex-col overflow-hidden bg-[#f0f0f0] font-['Open_Sans','DejaVu_Sans',sans-serif]">
      {defs}
      <AppHeader />
      <div className="flex min-h-0 flex-1">
        <SideBar />
        <main className="flex min-w-0 flex-1 flex-col">
          <div className="flex h-[30px] shrink-0 items-end border-b-2 border-[#8f8f8f] bg-[#efefef] pl-[18px]">
            <button className="flex h-6 w-[178px] items-center rounded-t-md border border-b-0 border-[#5c6b80] bg-linear-to-b from-[#c3d5ec] via-[#93b3dc] to-[#b4cbe8] pb-px pl-[9px] text-[15px] text-[#1b2a3a]">
              <SapIcon />
              <span className="ml-[3px]">X-Y Plane @ Z=0</span>
            </button>
            <div className="ml-auto flex items-center gap-[10px] pr-3 pb-[7px]">
              <button aria-label="Window list"><Caret className="h-[6px] w-[10px]" /></button>
              <button aria-label="Close view"><Icon size={12}><path d="M2 2L22 22M22 2L2 22" stroke="#000" strokeWidth="4" /></Icon></button>
            </div>
          </div>
          <div className="flex-1 bg-black" />
        </main>
      </div>
      <StatusBar />
      <Taskbar />

      <div className="absolute inset-x-0 top-[181px] flex justify-center">
        <LoadPatternDialog />
      </div>

      <div className="pointer-events-none absolute bottom-[22px] left-1/2 flex -translate-x-1/2 flex-col items-center font-bold text-[#9d9d9d]/50" aria-hidden="true">
        <span lang="ar" className="font-['DejaVu_Sans',sans-serif] text-[65px] leading-[68px]">مستقل</span>
        <span className="font-['Liberation_Sans',sans-serif] text-[38px] leading-[40px]">mostaql.com</span>
      </div>
    </div>
  );
}
